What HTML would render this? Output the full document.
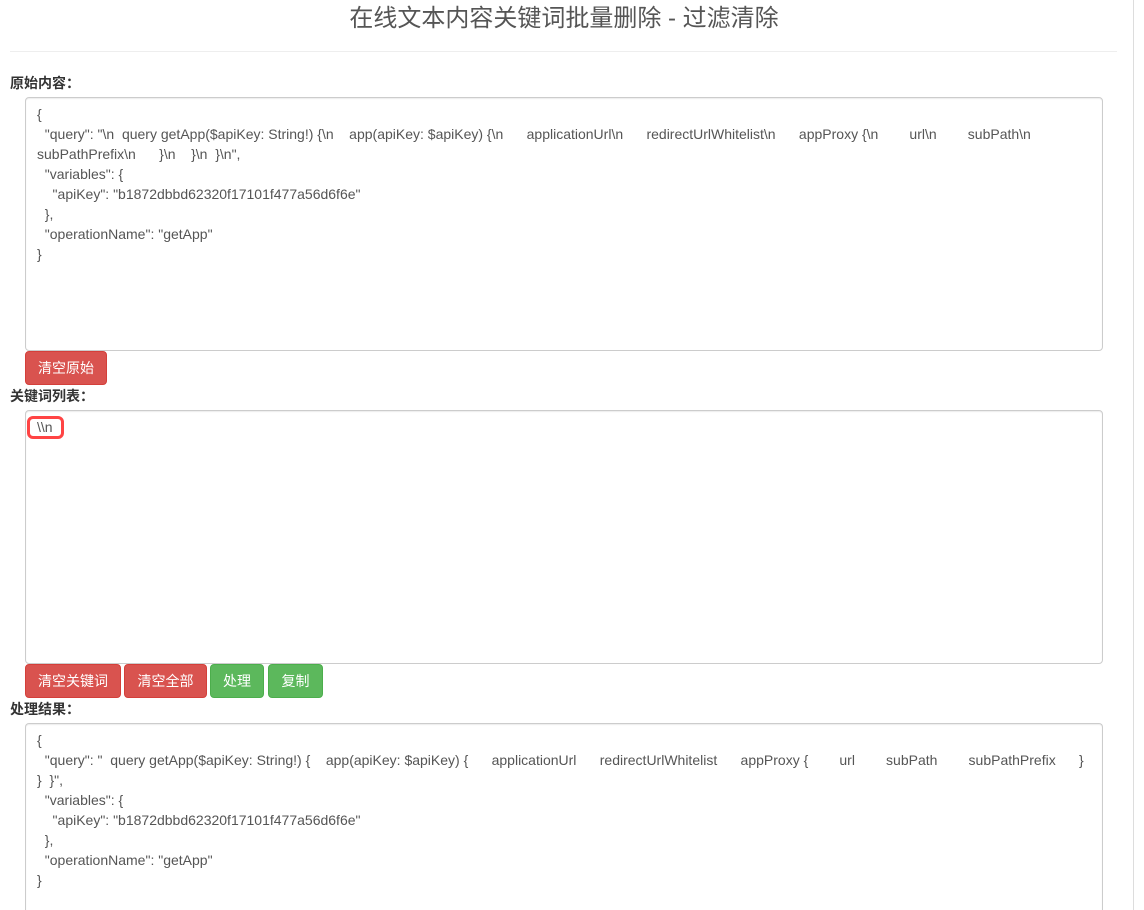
<!DOCTYPE html>
<html style="overflow:hidden;width:1144px;height:910px"><head><meta charset="utf-8"><style>
html,body{margin:0;width:1144px;height:910px;overflow:hidden}
body{background:#fff;font-family:"Liberation Sans","Noto Sans CJK SC",sans-serif;color:#555;position:relative}
.a{position:absolute}
h1{position:absolute;left:0;width:1128px;top:4px;margin:0;text-align:center;font-weight:normal;font-size:24px;color:#555;line-height:30px}
.hr{left:10px;width:1107px;top:51px;height:1px;background:#eee}
.vr{left:1133px;top:0;width:1px;height:910px;background:#ddd}
.lbl{left:10px;font-weight:bold;font-size:14px;color:#333}
.ta{left:25px;width:1076px;border:1px solid #ccc;border-radius:4px;box-shadow:inset 0 1px 1px rgba(0,0,0,.075)}
.tx{left:37px;font-size:14px;line-height:20px;white-space:pre;color:#555}
.btn{height:32px;line-height:32px;color:#fff;font-size:14px;text-align:center;border-radius:4px;top:0}
.r{background:#d9534f;border:1px solid #d43f3a}
.g{background:#5cb85c;border:1px solid #4cae4c}
</style></head><body>
<h1>在线文本内容关键词批量删除 - 过滤清除</h1>
<div class="a hr"></div>
<div class="a vr"></div>
<div class="a lbl" style="top:73px">原始内容：</div>
<div class="a ta" style="top:97px;height:252px"></div>
<div class="a tx" style="top:104px">{
  "query": "\n  query getApp($apiKey: String!) {\n    app(apiKey: $apiKey) {\n      applicationUrl\n      redirectUrlWhitelist\n      appProxy {\n        url\n        subPath\n
subPathPrefix\n      }\n    }\n  }\n",
  "variables": {
    "apiKey": "b1872dbbd62320f17101f477a56d6f6e"
  },
  "operationName": "getApp"
}</div>
<div class="a btn r" style="left:25px;top:351px;width:80px">清空原始</div>
<div class="a lbl" style="top:386px">关键词列表：</div>
<div class="a ta" style="top:410px;height:252px"></div>
<div class="a" style="left:27px;top:416px;width:31px;height:17px;border:3px solid #f44;border-radius:6px"></div>
<div class="a tx" style="top:417px">\\n</div>
<div class="a btn r" style="left:25px;top:664px;width:94px">清空关键词</div>
<div class="a btn r" style="left:124px;top:664px;width:81px">清空全部</div>
<div class="a btn g" style="left:210px;top:664px;width:52px">处理</div>
<div class="a btn g" style="left:268px;top:664px;width:53px">复制</div>
<div class="a lbl" style="top:699px">处理结果：</div>
<div class="a ta" style="top:723px;height:190px;border-bottom:none;border-radius:4px 4px 0 0"></div>
<div class="a tx" style="top:730px">{
  "query": "  query getApp($apiKey: String!) {    app(apiKey: $apiKey) {      applicationUrl      redirectUrlWhitelist      appProxy {        url        subPath        subPathPrefix      }
}  }",
  "variables": {
    "apiKey": "b1872dbbd62320f17101f477a56d6f6e"
  },
  "operationName": "getApp"
}</div>
</body></html>
